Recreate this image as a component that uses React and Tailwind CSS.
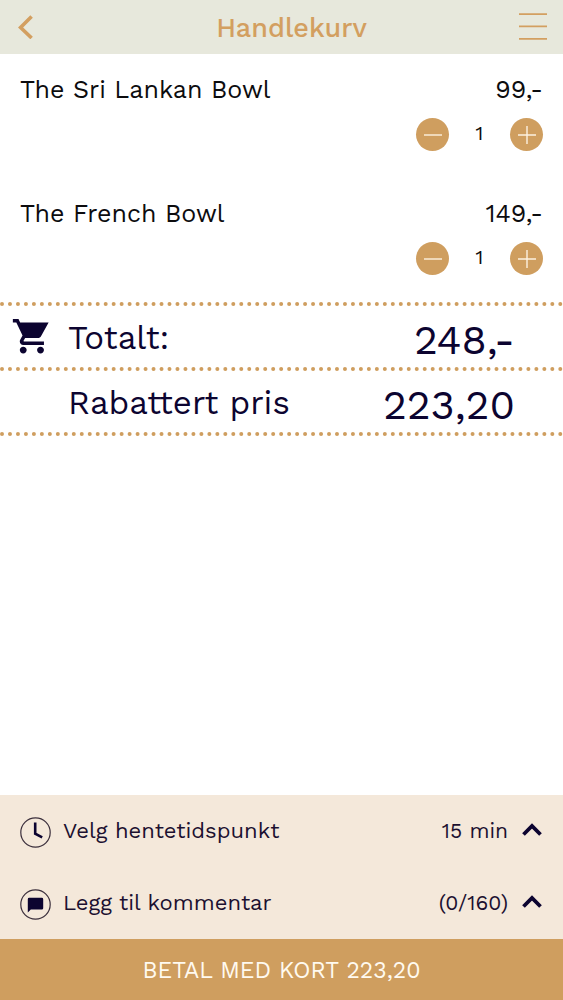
import { useState } from "react";

const INITIAL_ITEMS = [
  { id: 1, name: "The Sri Lankan Bowl", price: 99, quantity: 1 },
  { id: 2, name: "The French Bowl", price: 149, quantity: 1 },
];

const DISCOUNT = 0.9;

function QuantityButton({ label, onClick, plus }) {
  return (
    <button
      type="button"
      aria-label={label}
      onClick={onClick}
      className="flex h-[33px] w-[33px] items-center justify-center rounded-full bg-[#cf9e5f] text-[#fdf1e0]"
    >
      <svg
        className="h-5 w-5"
        fill="none"
        stroke="currentColor"
        strokeWidth={1.4}
        viewBox="0 0 20 20"
      >
        <path d={plus ? "M1 10h18M10 1v18" : "M1 10h18"} />
      </svg>
    </button>
  );
}

function CartItem({ item, onChange }) {
  return (
    <li className="h-[124px] px-5 pt-5">
      <div className="flex items-center justify-between text-[25px] leading-8">
        <h2>{item.name}</h2>
        <span>{item.price},-</span>
      </div>
      <div className="mt-3 flex items-center justify-end">
        <QuantityButton label="Færre" onClick={() => onChange(item.id, -1)} />
        <span className="w-[61px] pb-1 text-center text-xl leading-7">
          {item.quantity}
        </span>
        <QuantityButton plus label="Flere" onClick={() => onChange(item.id, 1)} />
      </div>
    </li>
  );
}

function TotalRow({ icon, label, value }) {
  return (
    <div className="flex h-[65px] items-center border-b-4 border-dotted border-[#cf9e5f] pt-0.5 pr-12 pl-3">
      <div className="w-14 shrink-0">{icon}</div>
      <span className="flex-1 text-[33px] leading-10">{label}</span>
      <span className="pt-1 text-[41px] leading-10">{value}</span>
    </div>
  );
}

function OptionRow({ icon, label, value }) {
  return (
    <button
      type="button"
      className="flex h-[72px] w-full items-center bg-[#f4e8da] px-5 pt-0.5 text-left"
    >
      <svg className="mr-3 h-[31px] w-[31px] shrink-0" fill="none" viewBox="0 0 31 31">
        <circle cx="15.5" cy="15.5" r="14.7" stroke="#3b2f3c" strokeWidth={1.2} />
        {icon}
      </svg>
      <span className="flex-1 pb-0.5 text-[22px] leading-7">{label}</span>
      <span className="pb-0.5 text-[21px] leading-7">{value}</span>
      <svg className="mr-px mb-1 ml-3.5 h-3.5 w-5 shrink-0" fill="none" viewBox="0 0 20 14">
        <path d="M1.5 11.5L10 3L18.5 11.5" stroke="#0c0430" strokeWidth={3.8} />
      </svg>
    </button>
  );
}

export default function App() {
  const [items, setItems] = useState(INITIAL_ITEMS);

  const total = items.reduce((sum, i) => sum + i.price * i.quantity, 0);
  const discounted = (total * DISCOUNT).toFixed(2).replace(".", ",");

  const handleChange = (id, step) => {
    setItems(
      items.map((i) =>
        i.id === id ? { ...i, quantity: Math.max(0, i.quantity + step) } : i,
      ),
    );
  };

  return (
    <div className="flex min-h-screen flex-col bg-white font-['Work_Sans',Inter,sans-serif] text-[#0c0c0e]">
      {/* Header */}
      <header className="flex h-[54px] items-center justify-between bg-[#e7e8dc] px-4 text-[#d39f60]">
        <button type="button" aria-label="Tilbake" className="w-12">
          <svg className="h-6 w-5" fill="none" viewBox="0 0 20 24">
            <path d="M15.6 1.5L4.6 12.5L15.6 23" stroke="currentColor" strokeWidth={3.6} />
          </svg>
        </button>
        <h1 className="pt-0.5 text-[27px] leading-8 font-medium">Handlekurv</h1>
        <button type="button" aria-label="Meny" className="w-7">
          <svg className="h-7 w-7" fill="none" viewBox="0 0 28 28">
            <path d="M0 1.2h28M0 13.4h28M0 25.8h28" stroke="currentColor" strokeWidth={1.8} />
          </svg>
        </button>
      </header>

      <main className="flex-1">
        <ul>
          {items.map((item) => (
            <CartItem key={item.id} item={item} onChange={handleChange} />
          ))}
        </ul>

        {/* Totals */}
        <section className="border-t-4 border-dotted border-[#cf9e5f] text-[#0c0430]">
          <TotalRow
            label="Totalt:"
            value={`${total},-`}
            icon={
              <svg className="h-[38px] w-[38px]" fill="currentColor" viewBox="0.5 2 22 22">
                <path d="M7 18c-1.1 0-1.99.9-1.99 2S5.9 22 7 22s2-.9 2-2-.9-2-2-2zM1 2v2h2l3.6 7.59-1.35 2.45c-.16.28-.25.61-.25.96 0 1.1.9 2 2 2h12v-2H7.42c-.14 0-.25-.11-.25-.25l.03-.12.9-1.63h7.45c.75 0 1.41-.41 1.75-1.03L21.7 4H5.21l-.94-2H1zm16 16c-1.1 0-1.99.9-1.99 2s.89 2 1.99 2 2-.9 2-2-.9-2-2-2z" />
              </svg>
            }
          />
          <TotalRow label="Rabattert pris" value={discounted} />
        </section>
      </main>

      {/* Pickup time, comment and payment */}
      <footer className="text-[#1c1030]">
        <OptionRow
          label="Velg hentetidspunkt"
          value="15 min"
          icon={
            <path d="M15.2 5.5v11.2l7 3.6" stroke="#0c0430" strokeWidth={2.6} />
          }
        />
        <OptionRow
          label="Legg til kommentar"
          value="(0/160)"
          icon={
            <path
              d="M9.2 8.8h12.6a1.4 1.4 0 0 1 1.4 1.4v9a1.4 1.4 0 0 1-1.4 1.4H10.8L7.8 23.4V10.2a1.4 1.4 0 0 1 1.4-1.4z"
              fill="#0c0430"
            />
          }
        />
        <button
          type="button"
          className="flex h-[61px] w-full items-center justify-center bg-[#cf9e5f] pt-0.5 text-[23px] leading-8 text-[#fffaf0]"
        >
          BETAL MED KORT {discounted}
        </button>
      </footer>
    </div>
  );
}
